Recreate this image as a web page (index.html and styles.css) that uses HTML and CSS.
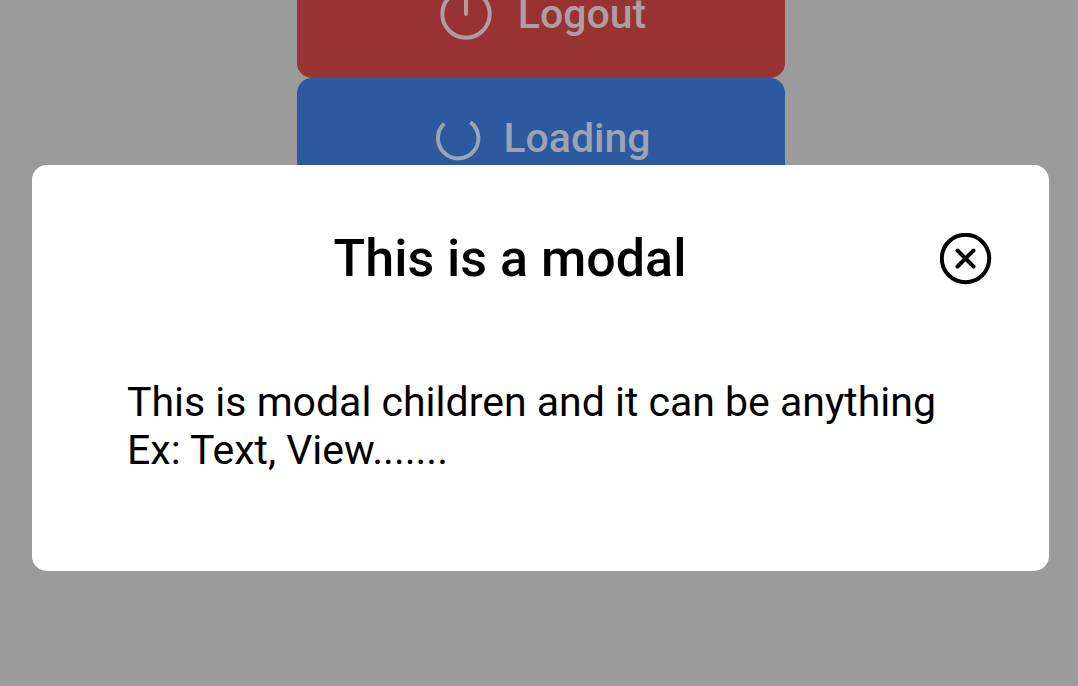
FILE: index.html
```html
<!DOCTYPE html>
<html lang="en">
<head>
<meta charset="utf-8">
<meta name="viewport" content="width=device-width, initial-scale=1">
<title>Modal</title>
<link rel="stylesheet" href="styles.css">
</head>
<body>
<div class="screen">
  <main class="buttons">
    <button class="button button-danger" type="button">
      <svg class="icon-power" viewBox="0 0 52 52" fill="none" stroke="currentColor" stroke-width="4" stroke-linecap="round" aria-hidden="true">
        <circle cx="26" cy="26" r="23.7"/>
        <path d="M26 7v19"/>
      </svg>
      Logout
    </button>
    <button class="button button-primary" type="button">
      <svg class="icon-spinner" viewBox="0 0 46 46" fill="none" stroke="currentColor" stroke-width="4" aria-hidden="true">
        <path d="M9.2 8.6A20.2 20.2 0 1 0 35.4 7.1"/>
      </svg>
      Loading
    </button>
  </main>
  <div class="overlay">
    <section class="modal" role="dialog" aria-modal="true" aria-labelledby="modal-title">
      <header class="modal-header">
        <h1 class="modal-title" id="modal-title">This is a modal</h1>
        <button class="close" type="button" aria-label="Close">
          <svg class="icon-close" viewBox="0 0 52 52" fill="none" stroke="currentColor" stroke-width="4" stroke-linecap="round" aria-hidden="true">
            <circle cx="25.5" cy="25.5" r="23.7"/>
            <path d="M17.5 17.5l16 16M33.5 17.5l-16 16"/>
          </svg>
        </button>
      </header>
      <p class="modal-body">This is modal children and it can be anything<br>Ex: Text, View.......</p>
    </section>
  </div>
</div>
</body>
</html>
```

FILE: styles.css
```css
* {
  box-sizing: border-box;
}

body {
  margin: 0;
  background: #9b9b9b;
  color: #000;
  font-family: Roboto, "Liberation Sans", sans-serif;
}

button {
  font: inherit;
  border: 0;
  padding: 0;
}

/* The page content and the overlay share one grid cell. */
.screen {
  display: grid;
  min-height: 100vh;
  overflow: hidden;
}

.buttons,
.overlay {
  grid-area: 1 / 1;
  min-width: 0;
}

.buttons {
  display: flex;
  flex-direction: column;
  align-items: center;
  margin-top: -46px;
  padding-left: 4px;
}

.button {
  display: flex;
  align-items: center;
  justify-content: center;
  width: 488px;
  max-width: 100%;
  height: 124px;
  padding: 0 0 4px 4px;
  border-radius: 15px;
  font-size: 41px;
  font-weight: 500;
  line-height: 48px;
}

.button-danger {
  gap: 26px;
  background: #993333;
  color: #ad9f9f;
}

.button-primary {
  gap: 22px;
  background: #2d599f;
  color: #9ba4b0;
}

.icon-power,
.icon-close {
  display: block;
  width: 52px;
  height: 52px;
}

.icon-spinner {
  width: 46px;
  height: 46px;
}

.overlay {
  z-index: 1;
  padding: 165px 29px 0 32px;
}

.modal {
  padding: 68px 57px 97px 48px;
  border-radius: 15px;
  background: #fff;
}

.modal-header {
  display: flex;
  align-items: center;
}

.modal-title {
  flex: 1;
  margin: 0;
  font-size: 52px;
  font-weight: 500;
  line-height: 52px;
  text-align: center;
}

.close {
  background: none;
  color: #000;
}

.modal-body {
  margin: 93px 0 0;
  padding-left: 47px;
  font-size: 41px;
  line-height: 48px;
}
```
